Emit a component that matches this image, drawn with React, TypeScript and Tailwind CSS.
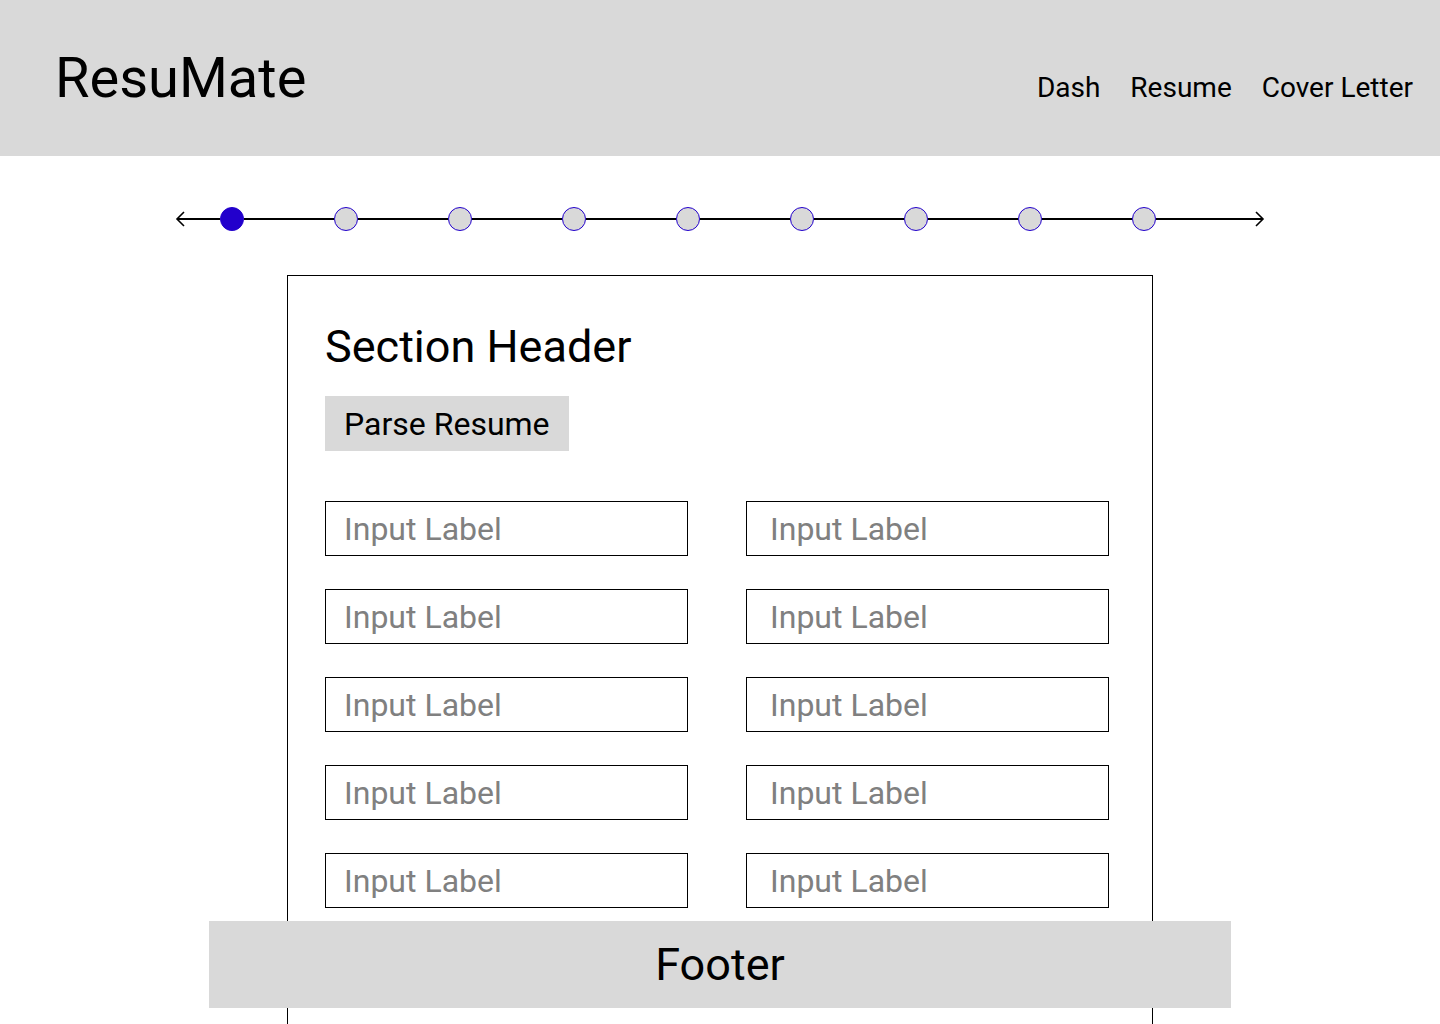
import React from "react";

const STEPS = 9;

function Chevron({ dir }: { dir: "left" | "right" }) {
  return (
    <svg width="10" height="16" viewBox="0 0 10 16" className="shrink-0">
      {dir === "left" ? (
        <path d="M9 1 L2 8 L9 15" fill="none" stroke="black" strokeWidth="1.6" />
      ) : (
        <path d="M1 1 L8 8 L1 15" fill="none" stroke="black" strokeWidth="1.6" />
      )}
    </svg>
  );
}

function Stepper({ active = 0 }: { active?: number }) {
  return (
    <div className="mx-auto mt-[51px] flex h-6 w-[1090px] items-center">
      <Chevron dir="left" />
      <div className="-ml-[8px] h-[1.5px] w-[43px] bg-black" />
      {Array.from({ length: STEPS }).map((_, i) => (
        <React.Fragment key={i}>
          <div
            className={
              i === active
                ? "h-6 w-6 shrink-0 rounded-full border border-[#2200cc] bg-[#2200cc]"
                : "h-6 w-6 shrink-0 rounded-full border border-[#2200cc] bg-[#d9d9d9]"
            }
          />
          {i < STEPS - 1 && <div className="h-[1.5px] w-[90px] bg-black" />}
        </React.Fragment>
      ))}
      <div className="-mr-[8px] h-[1.5px] flex-1 bg-black" />
      <Chevron dir="right" />
    </div>
  );
}

function InputBox({ right }: { right?: boolean }) {
  return (
    <div
      className={
        right
          ? "flex h-[55px] items-center border border-black pl-[23px] text-[32px] leading-none text-[#808080]"
          : "flex h-[55px] items-center border border-black pl-[18px] text-[32px] leading-none text-[#808080]"
      }
    >
      Input Label
    </div>
  );
}

export default function App() {
  return (
    <div className="min-h-screen bg-white text-black" style={{ fontFamily: "Roboto, 'Liberation Sans', sans-serif" }}>
      <header className="flex h-[156px] items-start justify-between bg-[#d9d9d9] pl-[55px] pr-[27px]">
        <div className="mt-[50px] text-[56px] leading-none">ResuMate</div>
        <nav className="mt-[74px] flex gap-[30px] text-[28px] leading-none">
          <a>Dash</a>
          <a>Resume</a>
          <a>Cover Letter</a>
        </nav>
      </header>

      <Stepper active={0} />

      <main className="mx-auto mt-[44px] w-[866px] border border-black pb-[150px] pl-[37px] pt-[48px]">
        <h2 className="text-[45px] leading-none">Section Header</h2>
        <button className="mt-[27px] flex h-[55px] w-[244px] items-center bg-[#d9d9d9] pl-[19px] text-[32px] leading-none">
          Parse Resume
        </button>
        <div className="mt-[50px] grid grid-cols-[363px_363px] gap-x-[58px] gap-y-[33px]">
          {Array.from({ length: 10 }).map((_, i) => (
            <InputBox key={i} right={i % 2 === 1} />
          ))}
        </div>
      </main>

      <div className="fixed inset-x-0 bottom-4 flex justify-center">
        <footer className="flex h-[87px] w-[1022px] items-center justify-center bg-[#d9d9d9] text-[45px] leading-none">
          Footer
        </footer>
      </div>
    </div>
  );
}
